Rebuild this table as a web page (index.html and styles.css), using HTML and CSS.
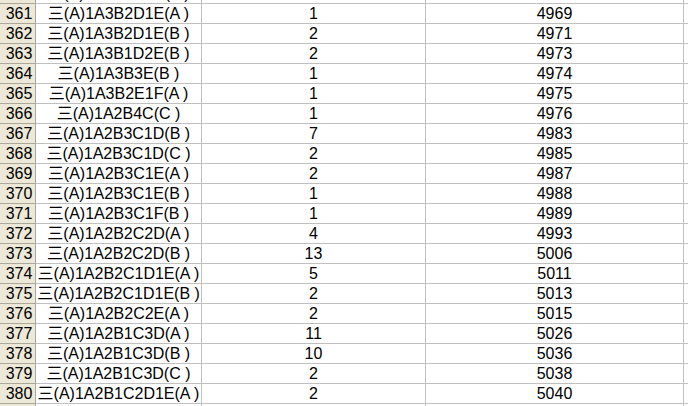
FILE: index.html
```html
<!DOCTYPE html>
<html>
<head>
<meta charset="utf-8">
<link rel="stylesheet" href="styles.css">
</head>
<body>
<div class="sheet">
  <div class="grid" id="grid">
    <div class="rh"></div><div class="c">三(A)1A3B2D1D(A )</div><div class="c"></div><div class="c"></div><div class="c e"></div>
    <div class="rh">361</div><div class="c">三(A)1A3B2D1E(A )</div><div class="c">1</div><div class="c">4969</div><div class="c e"></div>
    <div class="rh">362</div><div class="c">三(A)1A3B2D1E(B )</div><div class="c">2</div><div class="c">4971</div><div class="c e"></div>
    <div class="rh">363</div><div class="c">三(A)1A3B1D2E(B )</div><div class="c">2</div><div class="c">4973</div><div class="c e"></div>
    <div class="rh">364</div><div class="c">三(A)1A3B3E(B )</div><div class="c">1</div><div class="c">4974</div><div class="c e"></div>
    <div class="rh">365</div><div class="c">三(A)1A3B2E1F(A )</div><div class="c">1</div><div class="c">4975</div><div class="c e"></div>
    <div class="rh">366</div><div class="c">三(A)1A2B4C(C )</div><div class="c">1</div><div class="c">4976</div><div class="c e"></div>
    <div class="rh">367</div><div class="c">三(A)1A2B3C1D(B )</div><div class="c">7</div><div class="c">4983</div><div class="c e"></div>
    <div class="rh">368</div><div class="c">三(A)1A2B3C1D(C )</div><div class="c">2</div><div class="c">4985</div><div class="c e"></div>
    <div class="rh">369</div><div class="c">三(A)1A2B3C1E(A )</div><div class="c">2</div><div class="c">4987</div><div class="c e"></div>
    <div class="rh">370</div><div class="c">三(A)1A2B3C1E(B )</div><div class="c">1</div><div class="c">4988</div><div class="c e"></div>
    <div class="rh">371</div><div class="c">三(A)1A2B3C1F(B )</div><div class="c">1</div><div class="c">4989</div><div class="c e"></div>
    <div class="rh">372</div><div class="c">三(A)1A2B2C2D(A )</div><div class="c">4</div><div class="c">4993</div><div class="c e"></div>
    <div class="rh">373</div><div class="c">三(A)1A2B2C2D(B )</div><div class="c">13</div><div class="c">5006</div><div class="c e"></div>
    <div class="rh">374</div><div class="c">三(A)1A2B2C1D1E(A )</div><div class="c">5</div><div class="c">5011</div><div class="c e"></div>
    <div class="rh">375</div><div class="c">三(A)1A2B2C1D1E(B )</div><div class="c">2</div><div class="c">5013</div><div class="c e"></div>
    <div class="rh">376</div><div class="c">三(A)1A2B2C2E(A )</div><div class="c">2</div><div class="c">5015</div><div class="c e"></div>
    <div class="rh">377</div><div class="c">三(A)1A2B1C3D(A )</div><div class="c">11</div><div class="c">5026</div><div class="c e"></div>
    <div class="rh">378</div><div class="c">三(A)1A2B1C3D(B )</div><div class="c">10</div><div class="c">5036</div><div class="c e"></div>
    <div class="rh">379</div><div class="c">三(A)1A2B1C3D(C )</div><div class="c">2</div><div class="c">5038</div><div class="c e"></div>
    <div class="rh">380</div><div class="c">三(A)1A2B1C2D1E(A )</div><div class="c">2</div><div class="c">5040</div><div class="c e"></div>
    <div class="rh"></div><div class="c"></div><div class="c"></div><div class="c"></div><div class="c e"></div>
  </div>
</div>
</body>
</html>
```

FILE: styles.css
```css
html, body {
  margin: 0;
  padding: 0;
  background: #ffffff;
}
.sheet {
  width: 688px;
  height: 406px;
  overflow: hidden;
}
.grid {
  margin-top: -16px;
  display: grid;
  grid-template-columns: 36px 166px 224px 258px 60px;
  grid-auto-rows: 20px;
  font-family: "Liberation Sans", "Noto Sans CJK SC", Arial, sans-serif;
  font-size: 16px;
  color: #000;
}
.rh, .c {
  box-sizing: border-box;
  height: 20px;
  line-height: 19px;
  white-space: nowrap;
  overflow: visible;
}
.rh {
  background: #ece9d8;
  border-bottom: 1px solid #aca899;
  border-right: 1px solid #aca899;
  text-align: center;
  padding-left: 3px;
}
.c {
  border-bottom: 1px solid #c0c0c0;
  border-right: 1px solid #c0c0c0;
  text-align: center;
  display: flex;
  justify-content: center;
}
.e {
  border-right: none;
}
```
